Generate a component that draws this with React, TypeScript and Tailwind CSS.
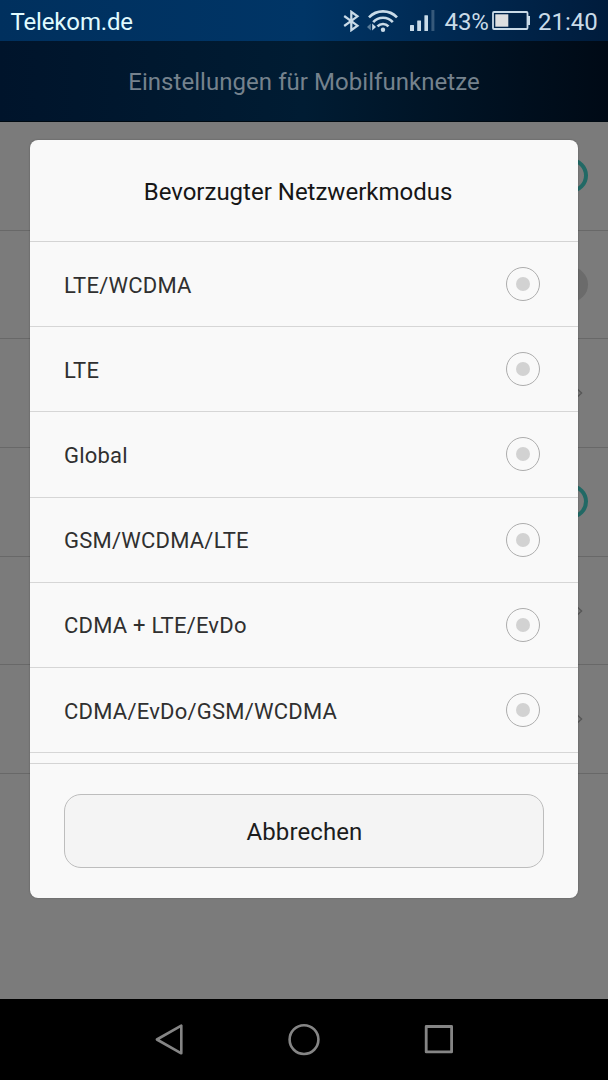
import { useState } from 'react';

const networkModes = [
  'LTE/WCDMA',
  'LTE',
  'Global',
  'GSM/WCDMA/LTE',
  'CDMA + LTE/EvDo',
  'CDMA/EvDo/GSM/WCDMA',
];

const settingRows = ['switch-on', 'switch-off', 'link', 'switch-on', 'link', 'link'];

function StatusBar() {
  return (
    <div className="flex h-[41px] items-center bg-linear-to-r from-[#00305e] via-[#003566] to-[#001c3c] pl-[10.5px] pr-[10.5px] text-2xl text-[#c9dbe8]">
      <span className="pt-[3px] text-[#e0fbff] tracking-[-0.15px]">Telekom.de</span>
      <svg className="ml-auto" width="17" height="22" viewBox="0 0 17 22" fill="none" stroke="currentColor" strokeWidth="2.2">
        <path d="M1.2 6 14.5 15.7 8.3 20.2V1.8L14.5 6.3 1.2 16" />
      </svg>
      <svg className="ml-[7px]" width="31" height="24" viewBox="0 0 31 24" fill="none" stroke="currentColor" strokeWidth="2.6">
        <path d="M2 8.3a19.4 19.4 0 0 1 28 0M6.2 13.1a13.2 13.2 0 0 1 19.6 0M10.5 17.4a7.6 7.6 0 0 1 11 0" />
        <circle cx="16" cy="20.8" r="2.2" fill="currentColor" stroke="none" />
        <path d="M3.8 14.5v7L0 18z" fill="#587b99" stroke="none" />
        <path d="M5.2 14.5v7L9 18z" fill="currentColor" stroke="none" />
      </svg>
      <svg className="ml-3" width="25" height="22" viewBox="0 0 25 22" fill="currentColor">
        <rect x="0" y="15" width="4" height="6" rx=".5" />
        <rect x="7.2" y="10.5" width="3.8" height="10.5" rx=".5" />
        <rect x="14.4" y="5.3" width="3.6" height="15.7" rx=".5" />
        <rect x="21.4" y="0" width="3" height="21" fill="#36597a" />
      </svg>
      <span className="ml-[9.5px] w-[45px] whitespace-nowrap pt-[3px] tracking-[-0.1px]">43%</span>
      <svg className="ml-[2.5px]" width="38" height="19" viewBox="0 0 38 19">
        <rect x="1" y="1" width="34.5" height="17" rx="1" fill="none" stroke="currentColor" strokeWidth="1.8" />
        <rect x="3.3" y="3.3" width="13" height="12.4" fill="#dddfe0" />
        <path d="M35.5 5H38v9h-2.5z" fill="currentColor" />
      </svg>
      <span className="ml-2 w-[59.5px] whitespace-nowrap pt-[3px]">21:40</span>
    </div>
  );
}

function SettingControl({ kind }: { kind: string }) {
  if (kind === 'switch-on') {
    return <div className="h-[35px] w-[35px] rounded-full border-4 border-[#216965]" />;
  }
  if (kind === 'switch-off') {
    return <div className="h-[35px] w-[35px] rounded-full bg-[#6b6b6b]" />;
  }
  return (
    <svg className="mr-[5px]" width="8" height="12" viewBox="0 0 8 12" fill="none" stroke="#565656" strokeWidth="1.3">
      <path d="M2 1.8 6.6 6 2 10.2" />
    </svg>
  );
}

function NavBar() {
  return (
    <div className="flex h-[81px] items-center justify-center gap-[103px] bg-black text-[#858585]">
      <svg width="32" height="34" viewBox="0 0 32 34" fill="none" stroke="currentColor" strokeWidth="2.6" strokeLinejoin="round">
        <path d="M3.9 16.5 28.3 2.7v27.6z" />
      </svg>
      <svg width="32" height="34" viewBox="0 0 32 34" fill="none" stroke="currentColor" strokeWidth="2.6">
        <circle cx="16" cy="16.6" r="14.4" />
      </svg>
      <svg width="32" height="34" viewBox="0 0 32 34" fill="none" stroke="currentColor" strokeWidth="2.8" strokeLinejoin="round">
        <rect x="3.2" y="3.5" width="25.4" height="25.4" />
      </svg>
    </div>
  );
}

export default function App() {
  const [selected, setSelected] = useState<string | null>(null);

  return (
    <div className="relative flex h-[1080px] w-[608px] flex-col overflow-hidden bg-[#7b7b7b] font-['Roboto',sans-serif]">
      <StatusBar />
      <header className="flex h-[81px] items-center justify-center border-b border-[#000a12] bg-linear-to-r from-[#00142b] via-[#001c33] to-[#000a16]">
        <h1 className="pt-px text-2xl tracking-[0.05px] text-[#75828d]">Einstellungen für Mobilfunknetze</h1>
      </header>

      <main className="flex-1">
        {settingRows.map((kind, i) => (
          <div key={i} className="flex h-[108.7px] items-center justify-end border-b border-[#686868] pr-5">
            <SettingControl kind={kind} />
          </div>
        ))}
      </main>

      <NavBar />

      {/* Network mode dialog */}
      <div className="absolute left-[30px] top-[140px] flex h-[758px] w-[548px] flex-col rounded-lg bg-[#f9f9f9] shadow-[0_0_2px_rgba(0,0,0,0.3)]">
        <h2 className="flex h-[102px] items-center justify-center border-b border-[#d4d4d4] pr-3 pt-[3px] text-2xl text-[#161616]">
          Bevorzugter Netzwerkmodus
        </h2>
        <div className="h-[521px] overflow-hidden">
          {networkModes.map((mode) => (
            <button
              key={mode}
              onClick={() => setSelected(mode)}
              className="flex h-[85.2px] w-full items-center justify-between border-b border-[#d6d6d6] pl-[34px] pr-[38px] text-[22px] tracking-[0.22px] text-[#303030]"
            >
              <span className="pt-0.5">{mode}</span>
              <span className="flex h-[34px] w-[34px] items-center justify-center rounded-full border border-[#adadad]">
                <span className={`h-3.5 w-3.5 rounded-full ${selected === mode ? 'bg-[#216965]' : 'bg-[#d2d2d2]'}`} />
              </span>
            </button>
          ))}
        </div>
        <div className="flex-1 border-t border-[#d4d4d4] px-[34px] pt-[30px]">
          <button className="flex h-[74px] w-full items-center justify-center rounded-[17px] border border-[#bdbdbd] bg-[#f4f4f4] pl-px pt-0.5 text-2xl tracking-[0.1px] text-[#1c1c1c]">
            Abbrechen
          </button>
        </div>
      </div>
    </div>
  );
}
